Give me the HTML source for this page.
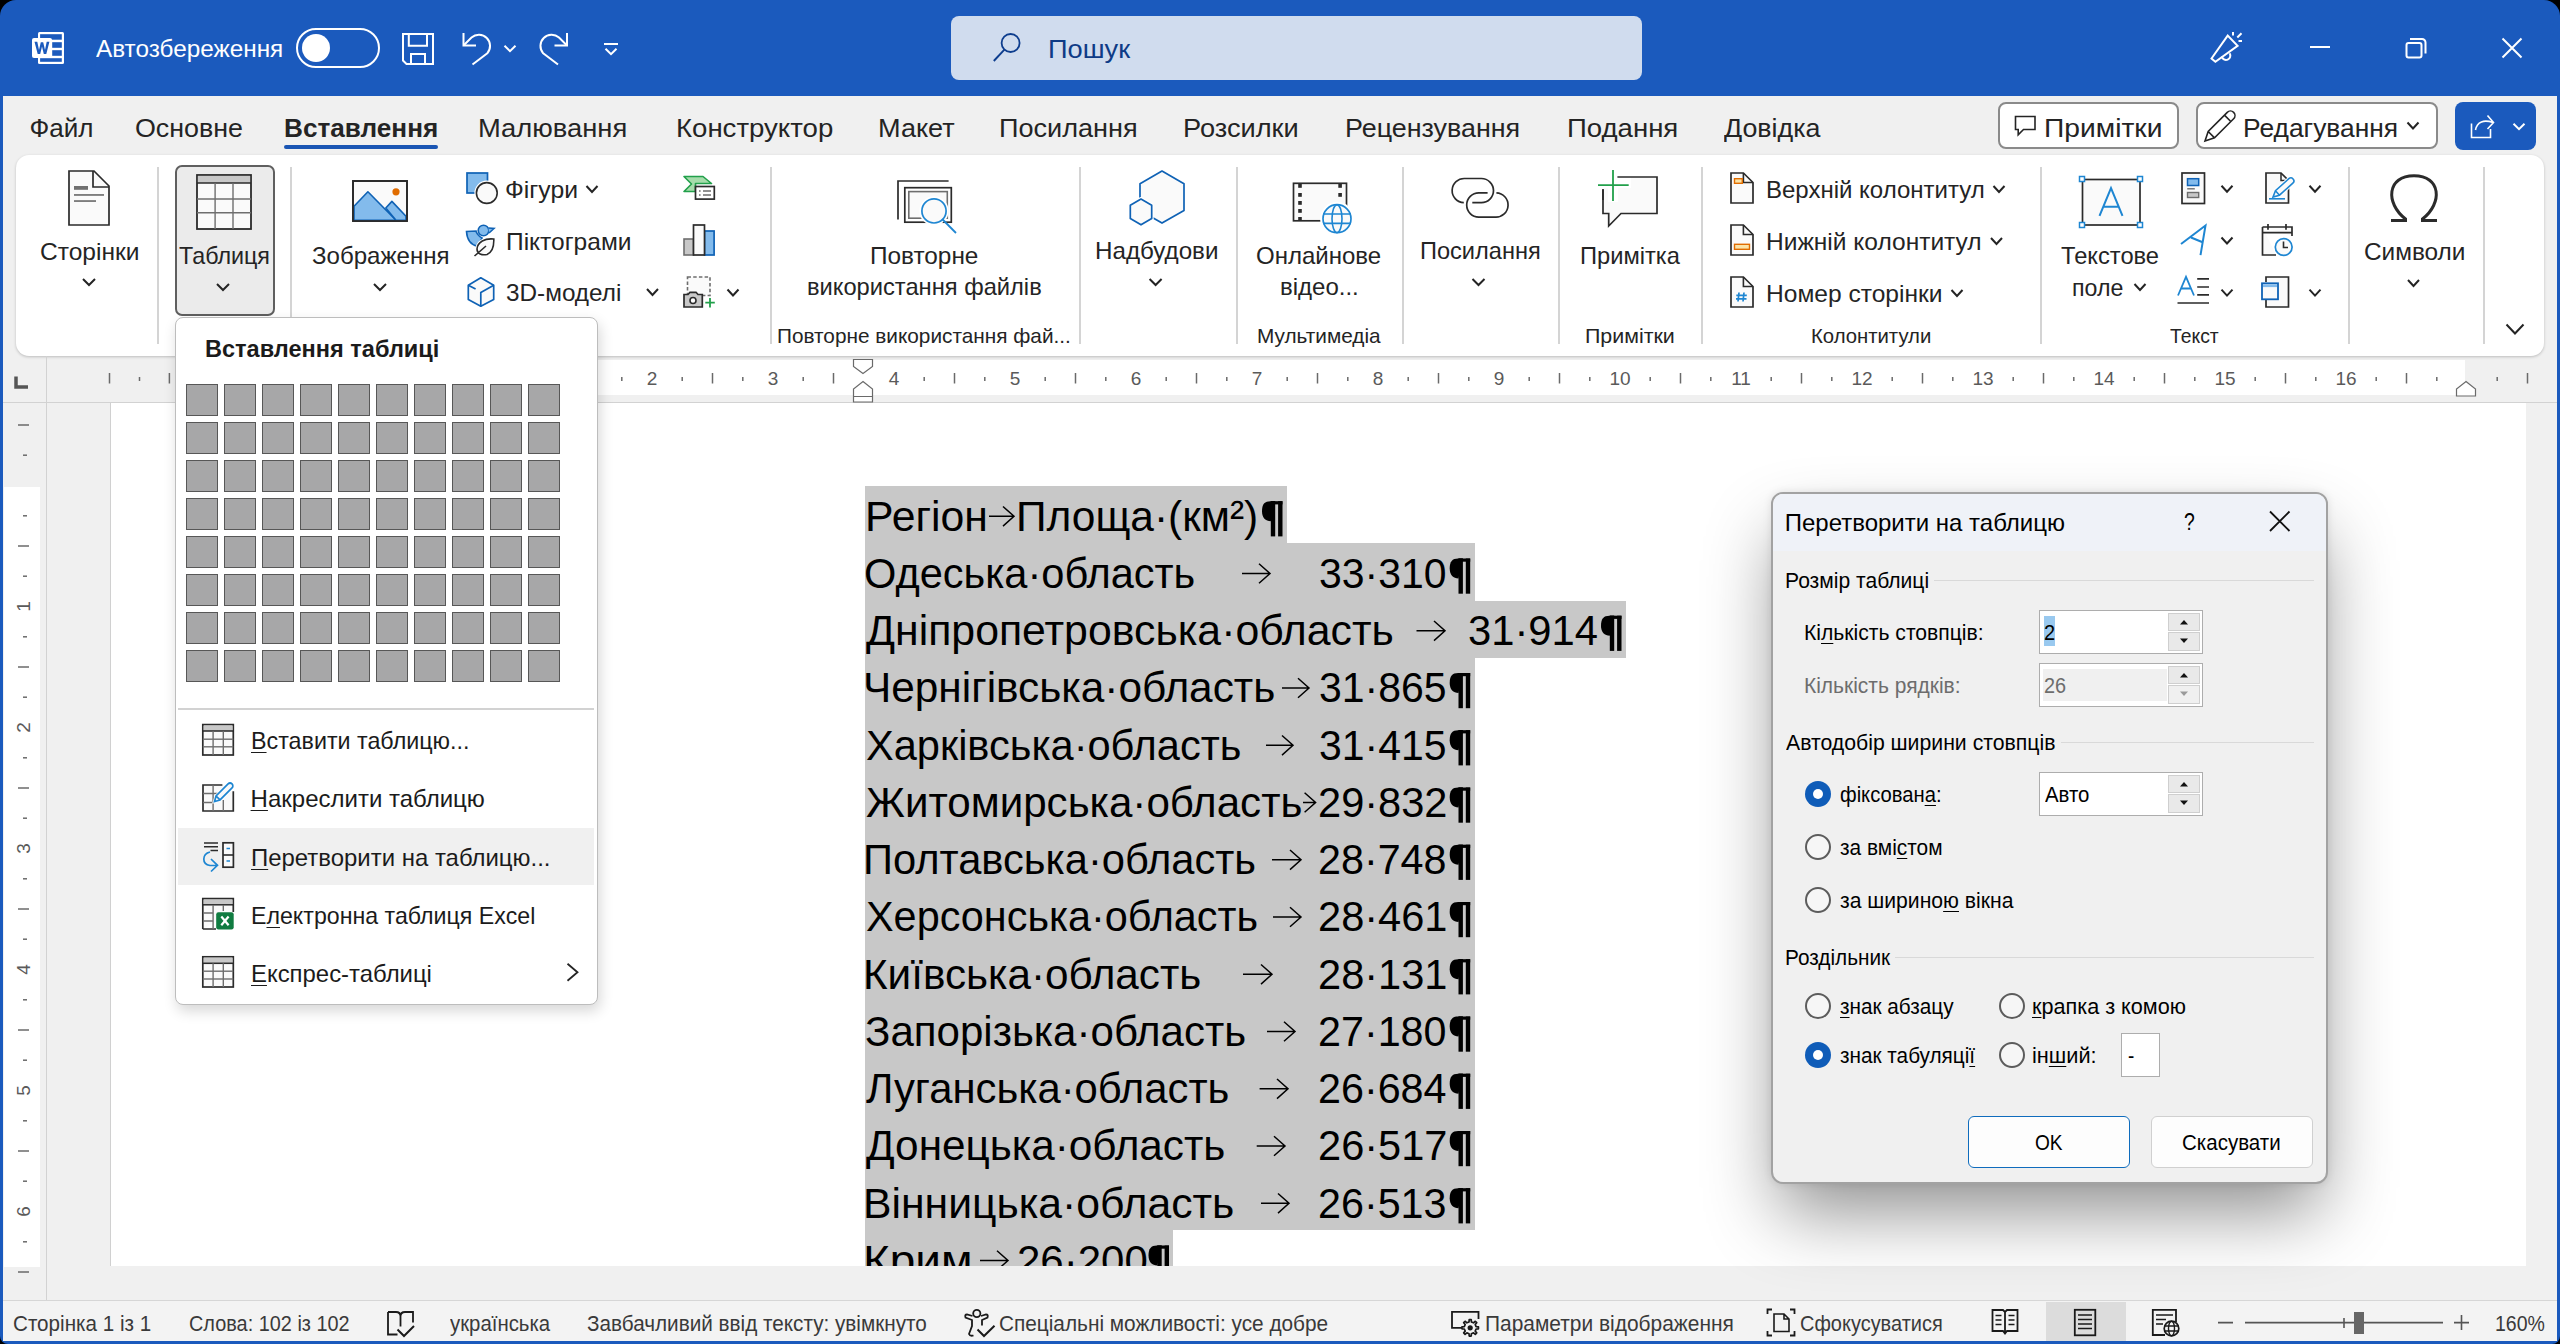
<!DOCTYPE html><html><head><meta charset="utf-8"><style>
*{margin:0;padding:0;box-sizing:border-box}
html,body{width:2560px;height:1344px;overflow:hidden;background:#000}
body{position:relative;font-family:"Liberation Sans",sans-serif}
.a{position:absolute}
.t{position:absolute;white-space:nowrap;line-height:1;transform-origin:0 0}
.t u{text-decoration:underline;text-decoration-thickness:1px;text-underline-offset:3px}
svg{position:absolute;overflow:visible}
.sep{position:absolute;width:2px;background:#d4d4d4}
.cell{position:absolute;width:32px;height:32px;background:#a7a7a8;border:1.5px solid #575757}
.rt{position:absolute;width:1.5px;background:#6a6a6a}
.radio{position:absolute;width:26px;height:26px;border-radius:50%;border:2px solid #5c5c5c;background:#f6f6f6}
.radio.on{background:#0f5cb8;border:none}
.radio.on::after{content:"";position:absolute;left:8px;top:8px;width:10px;height:10px;border-radius:50%;background:#fff}
</style></head><body>
<div class="a" style="left:0;top:0;width:2560px;height:1344px;background:#1b5abd;border-radius:16px 16px 8px 8px"></div>
<div class="a" style="left:3px;top:96px;width:2554px;height:1245px;background:#f0f0f0"></div>
<div class="a" style="left:951px;top:16px;width:691px;height:64px;background:#d0dcee;border-radius:8px"></div>
<div class="a" style="left:16px;top:155px;width:2528px;height:201px;background:#fff;border-radius:13px;box-shadow:0 1px 3px rgba(0,0,0,0.22)"></div>
<div class="a" style="left:250px;top:360px;width:2215px;height:35px;background:#fff"></div>
<div class="a" style="left:3px;top:402px;width:2554px;height:1px;background:#d2d2d2"></div>
<div class="a" style="left:46px;top:356px;width:1px;height:945px;background:#d2d2d2"></div>
<div class="a" style="left:4px;top:487px;width:36px;height:780px;background:#fff"></div>
<div class="a" style="left:110px;top:403px;width:2416px;height:863px;background:#fff;border-left:1px solid #d0d0d0"></div>
<div class="a" style="left:3px;top:1300px;width:2554px;height:1px;background:#d6d6d6"></div>
<div class="a" style="left:3px;top:1301px;width:2554px;height:40px;background:#f3f3f3"></div>
<div class="a" style="left:2046px;top:1302px;width:80px;height:39px;background:#dcdcdc"></div>
<div class="a" style="left:284px;top:145px;width:154px;height:4px;background:#1a55b3;border-radius:2px"></div>
<div class="a" style="left:1998px;top:102px;width:181px;height:47px;background:#fff;border:2px solid #8a8a8a;border-radius:8px"></div>
<div class="a" style="left:2196px;top:102px;width:242px;height:47px;background:#fff;border:2px solid #8a8a8a;border-radius:8px"></div>
<div class="a" style="left:2455px;top:102px;width:81px;height:48px;background:#1b5abd;border-radius:8px"></div>
<div class="sep" style="left:157px;top:167px;height:177px"></div>
<div class="sep" style="left:290px;top:167px;height:177px"></div>
<div class="sep" style="left:770px;top:167px;height:177px"></div>
<div class="sep" style="left:1079px;top:167px;height:177px"></div>
<div class="sep" style="left:1236px;top:167px;height:177px"></div>
<div class="sep" style="left:1402px;top:167px;height:177px"></div>
<div class="sep" style="left:1558px;top:167px;height:177px"></div>
<div class="sep" style="left:1701px;top:167px;height:177px"></div>
<div class="sep" style="left:2040px;top:167px;height:177px"></div>
<div class="sep" style="left:2348px;top:167px;height:177px"></div>
<div class="sep" style="left:2483px;top:167px;height:177px"></div>
<div class="a" style="left:175px;top:165px;width:100px;height:151px;background:#ebebeb;border:2px solid #5f5f5f;border-radius:7px"></div>
<div class="a" style="left:865px;top:486.00px;width:422.00px;height:57.00px;background:#c8c8c8"></div>
<div class="a" style="left:865px;top:543.25px;width:609.90px;height:57.25px;background:#c8c8c8"></div>
<div class="a" style="left:865px;top:600.50px;width:760.70px;height:57.25px;background:#c8c8c8"></div>
<div class="a" style="left:865px;top:657.75px;width:609.90px;height:57.25px;background:#c8c8c8"></div>
<div class="a" style="left:865px;top:715.00px;width:609.90px;height:57.25px;background:#c8c8c8"></div>
<div class="a" style="left:865px;top:772.25px;width:609.90px;height:57.25px;background:#c8c8c8"></div>
<div class="a" style="left:865px;top:829.50px;width:609.90px;height:57.25px;background:#c8c8c8"></div>
<div class="a" style="left:865px;top:886.75px;width:609.90px;height:57.25px;background:#c8c8c8"></div>
<div class="a" style="left:865px;top:944.00px;width:609.90px;height:57.25px;background:#c8c8c8"></div>
<div class="a" style="left:865px;top:1001.25px;width:609.90px;height:57.25px;background:#c8c8c8"></div>
<div class="a" style="left:865px;top:1058.50px;width:609.90px;height:57.25px;background:#c8c8c8"></div>
<div class="a" style="left:865px;top:1115.75px;width:609.90px;height:57.25px;background:#c8c8c8"></div>
<div class="a" style="left:865px;top:1173.00px;width:609.90px;height:57.25px;background:#c8c8c8"></div>
<div class="a" style="left:865px;top:1230.25px;width:307.70px;height:35.75px;background:#c8c8c8"></div>
<svg width="2560" height="1344" style="left:0;top:0"><path d="M989.0 516.3 H1013.5 M1003.0 506.5 L1014.0 516.3 L1003.0 526.1" fill="none" stroke="#000" stroke-width="1.5"/>
<path d="M1275.2 501.2 H1270.5 C1264.5 501.2 1262.0 504.2 1262.0 511.2 C1262.0 517.7 1265.5 521.2 1270.8 521.2 Z" fill="#000"/><rect x="1270.8" y="501.2" width="4.4" height="35.2" fill="#000"/><rect x="1278.1" y="501.2" width="4.4" height="35.2" fill="#000"/><rect x="1270.8" y="501.2" width="11.7" height="3.2" fill="#000"/>
<path d="M1242.0 573.5 H1269.5 M1259.0 563.8 L1270.0 573.5 L1259.0 583.3" fill="none" stroke="#000" stroke-width="1.5"/>
<path d="M1462.9 558.5 H1458.2 C1452.2 558.5 1449.7 561.5 1449.7 568.5 C1449.7 575.0 1453.2 578.5 1458.5 578.5 Z" fill="#000"/><rect x="1458.5" y="558.5" width="4.4" height="35.2" fill="#000"/><rect x="1465.8" y="558.5" width="4.4" height="35.2" fill="#000"/><rect x="1458.5" y="558.5" width="11.7" height="3.2" fill="#000"/>
<path d="M1416.5 630.8 H1444.5 M1434.0 621.0 L1445.0 630.8 L1434.0 640.6" fill="none" stroke="#000" stroke-width="1.5"/>
<path d="M1614.2 615.7 H1609.5 C1603.5 615.7 1601.0 618.7 1601.0 625.7 C1601.0 632.2 1604.5 635.7 1609.8 635.7 Z" fill="#000"/><rect x="1609.8" y="615.7" width="4.4" height="35.2" fill="#000"/><rect x="1617.1" y="615.7" width="4.4" height="35.2" fill="#000"/><rect x="1609.8" y="615.7" width="11.7" height="3.2" fill="#000"/>
<path d="M1282.0 688.0 H1308.5 M1298.0 678.2 L1309.0 688.0 L1298.0 697.8" fill="none" stroke="#000" stroke-width="1.5"/>
<path d="M1462.9 673.0 H1458.2 C1452.2 673.0 1449.7 676.0 1449.7 683.0 C1449.7 689.5 1453.2 693.0 1458.5 693.0 Z" fill="#000"/><rect x="1458.5" y="673.0" width="4.4" height="35.2" fill="#000"/><rect x="1465.8" y="673.0" width="4.4" height="35.2" fill="#000"/><rect x="1458.5" y="673.0" width="11.7" height="3.2" fill="#000"/>
<path d="M1266.0 745.3 H1292.5 M1282.0 735.5 L1293.0 745.3 L1282.0 755.1" fill="none" stroke="#000" stroke-width="1.5"/>
<path d="M1462.9 730.2 H1458.2 C1452.2 730.2 1449.7 733.2 1449.7 740.2 C1449.7 746.7 1453.2 750.2 1458.5 750.2 Z" fill="#000"/><rect x="1458.5" y="730.2" width="4.4" height="35.2" fill="#000"/><rect x="1465.8" y="730.2" width="4.4" height="35.2" fill="#000"/><rect x="1458.5" y="730.2" width="11.7" height="3.2" fill="#000"/>
<path d="M1303.0 802.5 H1315.1 M1304.6 792.8 L1315.6 802.5 L1304.6 812.3" fill="none" stroke="#000" stroke-width="1.5"/>
<path d="M1462.9 787.5 H1458.2 C1452.2 787.5 1449.7 790.5 1449.7 797.5 C1449.7 804.0 1453.2 807.5 1458.5 807.5 Z" fill="#000"/><rect x="1458.5" y="787.5" width="4.4" height="35.2" fill="#000"/><rect x="1465.8" y="787.5" width="4.4" height="35.2" fill="#000"/><rect x="1458.5" y="787.5" width="11.7" height="3.2" fill="#000"/>
<path d="M1272.0 859.8 H1300.5 M1290.0 850.0 L1301.0 859.8 L1290.0 869.6" fill="none" stroke="#000" stroke-width="1.5"/>
<path d="M1462.9 844.7 H1458.2 C1452.2 844.7 1449.7 847.7 1449.7 854.7 C1449.7 861.2 1453.2 864.7 1458.5 864.7 Z" fill="#000"/><rect x="1458.5" y="844.7" width="4.4" height="35.2" fill="#000"/><rect x="1465.8" y="844.7" width="4.4" height="35.2" fill="#000"/><rect x="1458.5" y="844.7" width="11.7" height="3.2" fill="#000"/>
<path d="M1273.0 917.0 H1300.5 M1290.0 907.2 L1301.0 917.0 L1290.0 926.8" fill="none" stroke="#000" stroke-width="1.5"/>
<path d="M1462.9 902.0 H1458.2 C1452.2 902.0 1449.7 905.0 1449.7 912.0 C1449.7 918.5 1453.2 922.0 1458.5 922.0 Z" fill="#000"/><rect x="1458.5" y="902.0" width="4.4" height="35.2" fill="#000"/><rect x="1465.8" y="902.0" width="4.4" height="35.2" fill="#000"/><rect x="1458.5" y="902.0" width="11.7" height="3.2" fill="#000"/>
<path d="M1243.0 974.3 H1271.5 M1261.0 964.5 L1272.0 974.3 L1261.0 984.1" fill="none" stroke="#000" stroke-width="1.5"/>
<path d="M1462.9 959.2 H1458.2 C1452.2 959.2 1449.7 962.2 1449.7 969.2 C1449.7 975.7 1453.2 979.2 1458.5 979.2 Z" fill="#000"/><rect x="1458.5" y="959.2" width="4.4" height="35.2" fill="#000"/><rect x="1465.8" y="959.2" width="4.4" height="35.2" fill="#000"/><rect x="1458.5" y="959.2" width="11.7" height="3.2" fill="#000"/>
<path d="M1267.0 1031.5 H1294.5 M1284.0 1021.8 L1295.0 1031.5 L1284.0 1041.3" fill="none" stroke="#000" stroke-width="1.5"/>
<path d="M1462.9 1016.5 H1458.2 C1452.2 1016.5 1449.7 1019.5 1449.7 1026.5 C1449.7 1033.0 1453.2 1036.5 1458.5 1036.5 Z" fill="#000"/><rect x="1458.5" y="1016.5" width="4.4" height="35.2" fill="#000"/><rect x="1465.8" y="1016.5" width="4.4" height="35.2" fill="#000"/><rect x="1458.5" y="1016.5" width="11.7" height="3.2" fill="#000"/>
<path d="M1259.6 1088.8 H1287.5 M1277.0 1079.0 L1288.0 1088.8 L1277.0 1098.6" fill="none" stroke="#000" stroke-width="1.5"/>
<path d="M1462.9 1073.7 H1458.2 C1452.2 1073.7 1449.7 1076.7 1449.7 1083.7 C1449.7 1090.2 1453.2 1093.7 1458.5 1093.7 Z" fill="#000"/><rect x="1458.5" y="1073.7" width="4.4" height="35.2" fill="#000"/><rect x="1465.8" y="1073.7" width="4.4" height="35.2" fill="#000"/><rect x="1458.5" y="1073.7" width="11.7" height="3.2" fill="#000"/>
<path d="M1256.7 1146.0 H1284.5 M1274.0 1136.2 L1285.0 1146.0 L1274.0 1155.8" fill="none" stroke="#000" stroke-width="1.5"/>
<path d="M1462.9 1131.0 H1458.2 C1452.2 1131.0 1449.7 1134.0 1449.7 1141.0 C1449.7 1147.5 1453.2 1151.0 1458.5 1151.0 Z" fill="#000"/><rect x="1458.5" y="1131.0" width="4.4" height="35.2" fill="#000"/><rect x="1465.8" y="1131.0" width="4.4" height="35.2" fill="#000"/><rect x="1458.5" y="1131.0" width="11.7" height="3.2" fill="#000"/>
<path d="M1261.0 1203.3 H1288.5 M1278.0 1193.5 L1289.0 1203.3 L1278.0 1213.1" fill="none" stroke="#000" stroke-width="1.5"/>
<path d="M1462.9 1188.2 H1458.2 C1452.2 1188.2 1449.7 1191.2 1449.7 1198.2 C1449.7 1204.7 1453.2 1208.2 1458.5 1208.2 Z" fill="#000"/><rect x="1458.5" y="1188.2" width="4.4" height="35.2" fill="#000"/><rect x="1465.8" y="1188.2" width="4.4" height="35.2" fill="#000"/><rect x="1458.5" y="1188.2" width="11.7" height="3.2" fill="#000"/>
<path d="M980.0 1260.5 H1007.5 M997.0 1250.8 L1008.0 1260.5 L997.0 1270.3" fill="none" stroke="#000" stroke-width="1.5"/>
<path d="M1161.7 1245.5 H1157.0 C1151.0 1245.5 1148.5 1248.5 1148.5 1255.5 C1148.5 1262.0 1152.0 1265.5 1157.3 1265.5 Z" fill="#000"/><rect x="1157.3" y="1245.5" width="4.4" height="35.2" fill="#000"/><rect x="1164.6" y="1245.5" width="4.4" height="35.2" fill="#000"/><rect x="1157.3" y="1245.5" width="11.7" height="3.2" fill="#000"/>
<path d="M198.2 377 V381" stroke="#6a6a6a" stroke-width="1.5"/><path d="M228.5 373 V383.5" stroke="#6a6a6a" stroke-width="1.5"/><path d="M258.8 377 V381" stroke="#6a6a6a" stroke-width="1.5"/><path d="M319.2 377 V381" stroke="#6a6a6a" stroke-width="1.5"/><path d="M349.5 373 V383.5" stroke="#6a6a6a" stroke-width="1.5"/><path d="M379.8 377 V381" stroke="#6a6a6a" stroke-width="1.5"/><path d="M440.2 377 V381" stroke="#6a6a6a" stroke-width="1.5"/><path d="M470.5 373 V383.5" stroke="#6a6a6a" stroke-width="1.5"/><path d="M500.8 377 V381" stroke="#6a6a6a" stroke-width="1.5"/><path d="M561.2 377 V381" stroke="#6a6a6a" stroke-width="1.5"/><path d="M591.5 373 V383.5" stroke="#6a6a6a" stroke-width="1.5"/><path d="M621.8 377 V381" stroke="#6a6a6a" stroke-width="1.5"/><path d="M682.2 377 V381" stroke="#6a6a6a" stroke-width="1.5"/><path d="M712.5 373 V383.5" stroke="#6a6a6a" stroke-width="1.5"/><path d="M742.8 377 V381" stroke="#6a6a6a" stroke-width="1.5"/><path d="M803.2 377 V381" stroke="#6a6a6a" stroke-width="1.5"/><path d="M833.5 373 V383.5" stroke="#6a6a6a" stroke-width="1.5"/><path d="M924.2 377 V381" stroke="#6a6a6a" stroke-width="1.5"/><path d="M954.5 373 V383.5" stroke="#6a6a6a" stroke-width="1.5"/><path d="M984.8 377 V381" stroke="#6a6a6a" stroke-width="1.5"/><path d="M1045.2 377 V381" stroke="#6a6a6a" stroke-width="1.5"/><path d="M1075.5 373 V383.5" stroke="#6a6a6a" stroke-width="1.5"/><path d="M1105.8 377 V381" stroke="#6a6a6a" stroke-width="1.5"/><path d="M1166.2 377 V381" stroke="#6a6a6a" stroke-width="1.5"/><path d="M1196.5 373 V383.5" stroke="#6a6a6a" stroke-width="1.5"/><path d="M1226.8 377 V381" stroke="#6a6a6a" stroke-width="1.5"/><path d="M1287.2 377 V381" stroke="#6a6a6a" stroke-width="1.5"/><path d="M1317.5 373 V383.5" stroke="#6a6a6a" stroke-width="1.5"/><path d="M1347.8 377 V381" stroke="#6a6a6a" stroke-width="1.5"/><path d="M1408.2 377 V381" stroke="#6a6a6a" stroke-width="1.5"/><path d="M1438.5 373 V383.5" stroke="#6a6a6a" stroke-width="1.5"/><path d="M1468.8 377 V381" stroke="#6a6a6a" stroke-width="1.5"/><path d="M1529.2 377 V381" stroke="#6a6a6a" stroke-width="1.5"/><path d="M1559.5 373 V383.5" stroke="#6a6a6a" stroke-width="1.5"/><path d="M1589.8 377 V381" stroke="#6a6a6a" stroke-width="1.5"/><path d="M1650.2 377 V381" stroke="#6a6a6a" stroke-width="1.5"/><path d="M1680.5 373 V383.5" stroke="#6a6a6a" stroke-width="1.5"/><path d="M1710.8 377 V381" stroke="#6a6a6a" stroke-width="1.5"/><path d="M1771.2 377 V381" stroke="#6a6a6a" stroke-width="1.5"/><path d="M1801.5 373 V383.5" stroke="#6a6a6a" stroke-width="1.5"/><path d="M1831.8 377 V381" stroke="#6a6a6a" stroke-width="1.5"/><path d="M1892.2 377 V381" stroke="#6a6a6a" stroke-width="1.5"/><path d="M1922.5 373 V383.5" stroke="#6a6a6a" stroke-width="1.5"/><path d="M1952.8 377 V381" stroke="#6a6a6a" stroke-width="1.5"/><path d="M2013.2 377 V381" stroke="#6a6a6a" stroke-width="1.5"/><path d="M2043.5 373 V383.5" stroke="#6a6a6a" stroke-width="1.5"/><path d="M2073.8 377 V381" stroke="#6a6a6a" stroke-width="1.5"/><path d="M2134.2 377 V381" stroke="#6a6a6a" stroke-width="1.5"/><path d="M2164.5 373 V383.5" stroke="#6a6a6a" stroke-width="1.5"/><path d="M2194.8 377 V381" stroke="#6a6a6a" stroke-width="1.5"/><path d="M2255.2 377 V381" stroke="#6a6a6a" stroke-width="1.5"/><path d="M2285.5 373 V383.5" stroke="#6a6a6a" stroke-width="1.5"/><path d="M2315.8 377 V381" stroke="#6a6a6a" stroke-width="1.5"/><path d="M2376.2 377 V381" stroke="#6a6a6a" stroke-width="1.5"/><path d="M2406.5 373 V383.5" stroke="#6a6a6a" stroke-width="1.5"/><path d="M2436.8 377 V381" stroke="#6a6a6a" stroke-width="1.5"/><path d="M2497.2 377 V381" stroke="#6a6a6a" stroke-width="1.5"/><path d="M2527.5 373 V383.5" stroke="#6a6a6a" stroke-width="1.5"/><path d="M109.5 373 V383.5" stroke="#6a6a6a" stroke-width="1.5"/><path d="M139.5 377 V381" stroke="#6a6a6a" stroke-width="1.5"/><path d="M169.4 373 V383.5" stroke="#6a6a6a" stroke-width="1.5"/>
<path d="M853.5 359.5 H872.5 V366.5 L863 373.5 L853.5 366.5 Z" fill="#fff" stroke="#6a6a6a" stroke-width="1.2"/>
<path d="M863 381.5 L872.5 389 V402 H853.5 V389 Z M853.5 396.5 H872.5" fill="#fff" stroke="#6a6a6a" stroke-width="1.2"/>
<path d="M2466 381.5 L2475.5 389 V396 H2456.5 V389 Z" fill="#fff" stroke="#6a6a6a" stroke-width="1.2"/>
<path d="M16 376.5 V387 H28" fill="none" stroke="#555" stroke-width="3.5"/>
<path d="M18 425.0 H29" stroke="#6a6a6a" stroke-width="1.5"/><path d="M23 455.2 H27" stroke="#6a6a6a" stroke-width="1.5"/><path d="M23 515.8 H27" stroke="#6a6a6a" stroke-width="1.5"/><path d="M18 546.0 H29" stroke="#6a6a6a" stroke-width="1.5"/><path d="M23 576.2 H27" stroke="#6a6a6a" stroke-width="1.5"/><path d="M23 636.8 H27" stroke="#6a6a6a" stroke-width="1.5"/><path d="M18 667.0 H29" stroke="#6a6a6a" stroke-width="1.5"/><path d="M23 697.2 H27" stroke="#6a6a6a" stroke-width="1.5"/><path d="M23 757.8 H27" stroke="#6a6a6a" stroke-width="1.5"/><path d="M18 788.0 H29" stroke="#6a6a6a" stroke-width="1.5"/><path d="M23 818.2 H27" stroke="#6a6a6a" stroke-width="1.5"/><path d="M23 878.8 H27" stroke="#6a6a6a" stroke-width="1.5"/><path d="M18 909.0 H29" stroke="#6a6a6a" stroke-width="1.5"/><path d="M23 939.2 H27" stroke="#6a6a6a" stroke-width="1.5"/><path d="M23 999.8 H27" stroke="#6a6a6a" stroke-width="1.5"/><path d="M18 1030.0 H29" stroke="#6a6a6a" stroke-width="1.5"/><path d="M23 1060.2 H27" stroke="#6a6a6a" stroke-width="1.5"/><path d="M23 1120.8 H27" stroke="#6a6a6a" stroke-width="1.5"/><path d="M18 1151.0 H29" stroke="#6a6a6a" stroke-width="1.5"/><path d="M23 1181.2 H27" stroke="#6a6a6a" stroke-width="1.5"/><path d="M23 1241.8 H27" stroke="#6a6a6a" stroke-width="1.5"/><path d="M18 1272.0 H29" stroke="#6a6a6a" stroke-width="1.5"/><text x="652.0" y="385" font-family="Liberation Sans" font-size="19" text-anchor="middle" fill="#5a5a5a">2</text><text x="773.0" y="385" font-family="Liberation Sans" font-size="19" text-anchor="middle" fill="#5a5a5a">3</text><text x="894.0" y="385" font-family="Liberation Sans" font-size="19" text-anchor="middle" fill="#5a5a5a">4</text><text x="1015.0" y="385" font-family="Liberation Sans" font-size="19" text-anchor="middle" fill="#5a5a5a">5</text><text x="1136.0" y="385" font-family="Liberation Sans" font-size="19" text-anchor="middle" fill="#5a5a5a">6</text><text x="1257.0" y="385" font-family="Liberation Sans" font-size="19" text-anchor="middle" fill="#5a5a5a">7</text><text x="1378.0" y="385" font-family="Liberation Sans" font-size="19" text-anchor="middle" fill="#5a5a5a">8</text><text x="1499.0" y="385" font-family="Liberation Sans" font-size="19" text-anchor="middle" fill="#5a5a5a">9</text><text x="1620.0" y="385" font-family="Liberation Sans" font-size="19" text-anchor="middle" fill="#5a5a5a">10</text><text x="1741.0" y="385" font-family="Liberation Sans" font-size="19" text-anchor="middle" fill="#5a5a5a">11</text><text x="1862.0" y="385" font-family="Liberation Sans" font-size="19" text-anchor="middle" fill="#5a5a5a">12</text><text x="1983.0" y="385" font-family="Liberation Sans" font-size="19" text-anchor="middle" fill="#5a5a5a">13</text><text x="2104.0" y="385" font-family="Liberation Sans" font-size="19" text-anchor="middle" fill="#5a5a5a">14</text><text x="2225.0" y="385" font-family="Liberation Sans" font-size="19" text-anchor="middle" fill="#5a5a5a">15</text><text x="2346.0" y="385" font-family="Liberation Sans" font-size="19" text-anchor="middle" fill="#5a5a5a">16</text><text x="29.5" y="613.3" font-family="Liberation Sans" font-size="19" text-anchor="middle" fill="#5a5a5a" transform="rotate(-90 22.9 606.5)" dx="-6.6" dy="0">1</text><text x="29.5" y="734.3" font-family="Liberation Sans" font-size="19" text-anchor="middle" fill="#5a5a5a" transform="rotate(-90 22.9 727.5)" dx="-6.6" dy="0">2</text><text x="29.5" y="855.3" font-family="Liberation Sans" font-size="19" text-anchor="middle" fill="#5a5a5a" transform="rotate(-90 22.9 848.5)" dx="-6.6" dy="0">3</text><text x="29.5" y="976.3" font-family="Liberation Sans" font-size="19" text-anchor="middle" fill="#5a5a5a" transform="rotate(-90 22.9 969.5)" dx="-6.6" dy="0">4</text><text x="29.5" y="1097.3" font-family="Liberation Sans" font-size="19" text-anchor="middle" fill="#5a5a5a" transform="rotate(-90 22.9 1090.5)" dx="-6.6" dy="0">5</text><text x="29.5" y="1218.3" font-family="Liberation Sans" font-size="19" text-anchor="middle" fill="#5a5a5a" transform="rotate(-90 22.9 1211.5)" dx="-6.6" dy="0">6</text></svg>
<div class="a" style="left:175px;top:317px;width:423px;height:688px;background:#fff;border:1.5px solid #bdbdbd;border-radius:8px;box-shadow:2px 6px 14px rgba(0,0,0,0.16)"></div>
<div class="cell" style="left:186px;top:384px"></div>
<div class="cell" style="left:224px;top:384px"></div>
<div class="cell" style="left:262px;top:384px"></div>
<div class="cell" style="left:300px;top:384px"></div>
<div class="cell" style="left:338px;top:384px"></div>
<div class="cell" style="left:376px;top:384px"></div>
<div class="cell" style="left:414px;top:384px"></div>
<div class="cell" style="left:452px;top:384px"></div>
<div class="cell" style="left:490px;top:384px"></div>
<div class="cell" style="left:528px;top:384px"></div>
<div class="cell" style="left:186px;top:422px"></div>
<div class="cell" style="left:224px;top:422px"></div>
<div class="cell" style="left:262px;top:422px"></div>
<div class="cell" style="left:300px;top:422px"></div>
<div class="cell" style="left:338px;top:422px"></div>
<div class="cell" style="left:376px;top:422px"></div>
<div class="cell" style="left:414px;top:422px"></div>
<div class="cell" style="left:452px;top:422px"></div>
<div class="cell" style="left:490px;top:422px"></div>
<div class="cell" style="left:528px;top:422px"></div>
<div class="cell" style="left:186px;top:460px"></div>
<div class="cell" style="left:224px;top:460px"></div>
<div class="cell" style="left:262px;top:460px"></div>
<div class="cell" style="left:300px;top:460px"></div>
<div class="cell" style="left:338px;top:460px"></div>
<div class="cell" style="left:376px;top:460px"></div>
<div class="cell" style="left:414px;top:460px"></div>
<div class="cell" style="left:452px;top:460px"></div>
<div class="cell" style="left:490px;top:460px"></div>
<div class="cell" style="left:528px;top:460px"></div>
<div class="cell" style="left:186px;top:498px"></div>
<div class="cell" style="left:224px;top:498px"></div>
<div class="cell" style="left:262px;top:498px"></div>
<div class="cell" style="left:300px;top:498px"></div>
<div class="cell" style="left:338px;top:498px"></div>
<div class="cell" style="left:376px;top:498px"></div>
<div class="cell" style="left:414px;top:498px"></div>
<div class="cell" style="left:452px;top:498px"></div>
<div class="cell" style="left:490px;top:498px"></div>
<div class="cell" style="left:528px;top:498px"></div>
<div class="cell" style="left:186px;top:536px"></div>
<div class="cell" style="left:224px;top:536px"></div>
<div class="cell" style="left:262px;top:536px"></div>
<div class="cell" style="left:300px;top:536px"></div>
<div class="cell" style="left:338px;top:536px"></div>
<div class="cell" style="left:376px;top:536px"></div>
<div class="cell" style="left:414px;top:536px"></div>
<div class="cell" style="left:452px;top:536px"></div>
<div class="cell" style="left:490px;top:536px"></div>
<div class="cell" style="left:528px;top:536px"></div>
<div class="cell" style="left:186px;top:574px"></div>
<div class="cell" style="left:224px;top:574px"></div>
<div class="cell" style="left:262px;top:574px"></div>
<div class="cell" style="left:300px;top:574px"></div>
<div class="cell" style="left:338px;top:574px"></div>
<div class="cell" style="left:376px;top:574px"></div>
<div class="cell" style="left:414px;top:574px"></div>
<div class="cell" style="left:452px;top:574px"></div>
<div class="cell" style="left:490px;top:574px"></div>
<div class="cell" style="left:528px;top:574px"></div>
<div class="cell" style="left:186px;top:612px"></div>
<div class="cell" style="left:224px;top:612px"></div>
<div class="cell" style="left:262px;top:612px"></div>
<div class="cell" style="left:300px;top:612px"></div>
<div class="cell" style="left:338px;top:612px"></div>
<div class="cell" style="left:376px;top:612px"></div>
<div class="cell" style="left:414px;top:612px"></div>
<div class="cell" style="left:452px;top:612px"></div>
<div class="cell" style="left:490px;top:612px"></div>
<div class="cell" style="left:528px;top:612px"></div>
<div class="cell" style="left:186px;top:650px"></div>
<div class="cell" style="left:224px;top:650px"></div>
<div class="cell" style="left:262px;top:650px"></div>
<div class="cell" style="left:300px;top:650px"></div>
<div class="cell" style="left:338px;top:650px"></div>
<div class="cell" style="left:376px;top:650px"></div>
<div class="cell" style="left:414px;top:650px"></div>
<div class="cell" style="left:452px;top:650px"></div>
<div class="cell" style="left:490px;top:650px"></div>
<div class="cell" style="left:528px;top:650px"></div>
<div class="a" style="left:178px;top:708px;width:416px;height:2px;background:#d2d2d2"></div>
<div class="a" style="left:178px;top:828px;width:416px;height:57px;background:#f0f0f0"></div>
<div class="a" style="left:1771px;top:492px;width:557px;height:692px;background:#f0f0f0;border:2px solid #a2a2a2;border-radius:12px;box-shadow:0 36px 72px -8px rgba(0,0,0,0.44), 0 0 8px rgba(0,0,0,0.10);overflow:hidden"><div style="height:57px;background:#eff2f8"></div></div>
<div class="a" style="left:1934px;top:580px;width:380px;height:1px;background:#d9d9d9"></div>
<div class="a" style="left:2061px;top:742px;width:253px;height:1px;background:#d9d9d9"></div>
<div class="a" style="left:1895px;top:957px;width:419px;height:1px;background:#d9d9d9"></div>
<div class="a" style="left:2039px;top:610px;width:164px;height:44px;background:#fff;border:1.5px solid #adadad"></div><div class="a" style="left:2168px;top:613px;width:32px;height:18px;background:#e9e9e9;border:1px solid #cfcfcf"></div><div class="a" style="left:2168px;top:632px;width:32px;height:19px;background:#e9e9e9;border:1px solid #cfcfcf"></div>
<div class="a" style="left:2039px;top:663px;width:164px;height:44px;background:#fff;border:1.5px solid #adadad"></div><div class="a" style="left:2043px;top:669px;width:124px;height:32px;background:#f0f0f0"></div><div class="a" style="left:2168px;top:666px;width:32px;height:18px;background:#e9e9e9;border:1px solid #cfcfcf"></div><div class="a" style="left:2168px;top:685px;width:32px;height:19px;background:#f0f0f0;border:1px solid #cfcfcf"></div>
<div class="a" style="left:2039px;top:772px;width:164px;height:44px;background:#fff;border:1.5px solid #adadad"></div><div class="a" style="left:2168px;top:775px;width:32px;height:18px;background:#e9e9e9;border:1px solid #cfcfcf"></div><div class="a" style="left:2168px;top:794px;width:32px;height:19px;background:#e9e9e9;border:1px solid #cfcfcf"></div>
<div class="a" style="left:2044px;top:616px;width:11px;height:30px;background:#99c9ef"></div>
<div class="a" style="left:2121px;top:1033px;width:39px;height:44px;background:#fff;border:1.5px solid #adadad"></div>
<div class="radio on" style="left:1805px;top:781px"></div>
<div class="radio" style="left:1805px;top:834px"></div>
<div class="radio" style="left:1805px;top:887px"></div>
<div class="radio" style="left:1805px;top:993px"></div>
<div class="radio" style="left:1999px;top:993px"></div>
<div class="radio on" style="left:1805px;top:1042px"></div>
<div class="radio" style="left:1999px;top:1042px"></div>
<div class="a" style="left:1968px;top:1116px;width:162px;height:52px;background:#fdfdfd;border:1.6px solid #0f6cbd;border-radius:6px"></div>
<div class="a" style="left:2151px;top:1116px;width:162px;height:52px;background:#fdfdfd;border:1.5px solid #d0d0d0;border-radius:6px"></div>
<div class="t" id="t0" style="left:96.30px;top:37.28px;font-size:24px;color:#ffffff;transform:scaleX(1.0124);">Автозбереження</div>
<div class="t" id="t1" style="left:1048.31px;top:35.79px;font-size:26px;color:#0e3b86;transform:scaleX(1.0467);">Пошук</div>
<div class="t" id="t2" style="left:29.60px;top:114.99px;font-size:26px;color:#242424;">Файл</div>
<div class="t" id="t3" style="left:135.47px;top:114.99px;font-size:26px;color:#242424;transform:scaleX(1.0318);">Основне</div>
<div class="t" id="t4" style="left:477.90px;top:114.99px;font-size:26px;color:#242424;transform:scaleX(1.0520);">Малювання</div>
<div class="t" id="t5" style="left:675.88px;top:114.99px;font-size:26px;color:#242424;transform:scaleX(1.0605);">Конструктор</div>
<div class="t" id="t6" style="left:877.92px;top:114.99px;font-size:26px;color:#242424;transform:scaleX(1.0422);">Макет</div>
<div class="t" id="t7" style="left:998.52px;top:114.99px;font-size:26px;color:#242424;transform:scaleX(1.0414);">Посилання</div>
<div class="t" id="t8" style="left:1182.91px;top:114.99px;font-size:26px;color:#242424;transform:scaleX(1.0461);">Розсилки</div>
<div class="t" id="t9" style="left:1344.93px;top:114.99px;font-size:26px;color:#242424;transform:scaleX(1.0336);">Рецензування</div>
<div class="t" id="t10" style="left:1566.88px;top:114.99px;font-size:26px;color:#242424;transform:scaleX(1.0596);">Подання</div>
<div class="t" id="t11" style="left:1724.00px;top:114.99px;font-size:26px;color:#242424;transform:scaleX(1.0312);">Довідка</div>
<div class="t" id="t12" style="left:283.99px;top:114.99px;font-size:26px;color:#242424;font-weight:700;transform:scaleX(1.0059);">Вставлення</div>
<div class="t" id="t13" style="left:2043.83px;top:114.99px;font-size:26px;color:#242424;transform:scaleX(1.0852);">Примітки</div>
<div class="t" id="t14" style="left:2242.97px;top:114.99px;font-size:26px;color:#242424;transform:scaleX(1.0140);">Редагування</div>
<div class="t" id="t15" style="left:39.58px;top:239.68px;font-size:24px;color:#242424;transform:scaleX(1.0228);">Сторінки</div>
<div class="t" id="t16" style="left:179.00px;top:243.68px;font-size:24px;color:#242424;transform:scaleX(0.9703);">Таблиця</div>
<div class="t" id="t17" style="left:311.50px;top:243.68px;font-size:24px;color:#242424;transform:scaleX(1.0022);">Зображення</div>
<div class="t" id="t18" style="left:504.97px;top:178.08px;font-size:24px;color:#242424;transform:scaleX(1.0305);">Фігури</div>
<div class="t" id="t19" style="left:505.98px;top:229.68px;font-size:24px;color:#242424;transform:scaleX(1.0218);">Піктограми</div>
<div class="t" id="t20" style="left:506.00px;top:281.28px;font-size:24px;color:#242424;transform:scaleX(1.0129);">3D-моделі</div>
<div class="t" id="t21" style="left:869.99px;top:243.68px;font-size:24px;color:#242424;transform:scaleX(1.0143);">Повторне</div>
<div class="t" id="t22" style="left:807.01px;top:274.68px;font-size:24px;color:#242424;transform:scaleX(0.9868);">використання файлів</div>
<div class="t" id="t23" style="left:777.01px;top:325.22px;font-size:21px;color:#242424;transform:scaleX(0.9897);">Повторне використання фай...</div>
<div class="t" id="t24" style="left:1094.99px;top:238.68px;font-size:24px;color:#242424;transform:scaleX(1.0066);">Надбудови</div>
<div class="t" id="t25" style="left:1256.00px;top:243.68px;font-size:24px;color:#242424;">Онлайнове</div>
<div class="t" id="t26" style="left:1280.00px;top:274.68px;font-size:24px;color:#242424;">відео...</div>
<div class="t" id="t27" style="left:1257.01px;top:325.22px;font-size:21px;color:#242424;transform:scaleX(0.9900);">Мультимедіа</div>
<div class="t" id="t28" style="left:1419.62px;top:239.08px;font-size:24px;color:#242424;transform:scaleX(0.9829);">Посилання</div>
<div class="t" id="t29" style="left:1579.51px;top:243.68px;font-size:24px;color:#242424;transform:scaleX(0.9866);">Примітка</div>
<div class="t" id="t30" style="left:1584.98px;top:325.02px;font-size:21px;color:#242424;transform:scaleX(1.0184);">Примітки</div>
<div class="t" id="t31" style="left:1766.00px;top:177.68px;font-size:24px;color:#242424;">Верхній колонтитул</div>
<div class="t" id="t32" style="left:1765.98px;top:230.18px;font-size:24px;color:#242424;transform:scaleX(1.0218);">Нижній колонтитул</div>
<div class="t" id="t33" style="left:1765.98px;top:281.68px;font-size:24px;color:#242424;transform:scaleX(1.0232);">Номер сторінки</div>
<div class="t" id="t34" style="left:1811.03px;top:325.02px;font-size:21px;color:#242424;transform:scaleX(0.9665);">Колонтитули</div>
<div class="t" id="t35" style="left:2061.00px;top:243.68px;font-size:24px;color:#242424;transform:scaleX(0.9871);">Текстове</div>
<div class="t" id="t36" style="left:2072.04px;top:275.68px;font-size:24px;color:#242424;transform:scaleX(0.9649);">поле</div>
<div class="t" id="t37" style="left:2170.00px;top:325.02px;font-size:21px;color:#242424;transform:scaleX(0.9202);">Текст</div>
<div class="t" id="t38" style="left:2363.99px;top:239.68px;font-size:24px;color:#242424;transform:scaleX(1.0149);">Символи</div>
<div class="t" id="t39" style="left:205.02px;top:337.38px;font-size:24px;color:#1b1b1b;font-weight:700;transform:scaleX(0.9808);">Вставлення таблиці</div>
<div class="t" id="t40" style="left:250.63px;top:729.28px;font-size:24px;color:#1b1b1b;transform:scaleX(0.9698);"><u>В</u>ставити таблицю...</div>
<div class="t" id="t41" style="left:250.60px;top:787.48px;font-size:24px;color:#1b1b1b;"><u>Н</u>акреслити таблицю</div>
<div class="t" id="t42" style="left:250.60px;top:845.68px;font-size:24px;color:#1b1b1b;transform:scaleX(0.9972);"><u>П</u>еретворити на таблицю...</div>
<div class="t" id="t43" style="left:250.63px;top:903.88px;font-size:24px;color:#1b1b1b;transform:scaleX(0.9653);">Е<u>л</u>ектронна таблиця Excel</div>
<div class="t" id="t44" style="left:250.60px;top:962.08px;font-size:24px;color:#1b1b1b;transform:scaleX(0.9958);"><u>Е</u>кспрес-таблиці</div>
<div class="t" id="t45" style="left:1784.70px;top:510.68px;font-size:24px;color:#000000;">Перетворити на таблицю</div>
<div class="t" id="t46" style="left:2184.00px;top:510.18px;font-size:24px;color:#000000;transform:scaleX(0.8077);">?</div>
<div class="t" id="t47" style="left:1784.74px;top:570.38px;font-size:22px;color:#000000;transform:scaleX(0.9580);">Розмір таблиці</div>
<div class="t" id="t48" style="left:1804.04px;top:622.08px;font-size:22px;color:#000000;transform:scaleX(0.9600);">Кі<u>л</u>ькість стовпців:</div>
<div class="t" id="t49" style="left:1804.05px;top:674.98px;font-size:22px;color:#6d6d6d;transform:scaleX(0.9531);">Кількість рядків:</div>
<div class="t" id="t50" style="left:1785.70px;top:732.38px;font-size:22px;color:#000000;transform:scaleX(0.9651);">Автодобір ширини стовпців</div>
<div class="t" id="t51" style="left:2044.09px;top:622.08px;font-size:22px;color:#000000;transform:scaleX(0.9091);">2</div>
<div class="t" id="t52" style="left:2044.10px;top:674.98px;font-size:22px;color:#6d6d6d;transform:scaleX(0.9038);">26</div>
<div class="t" id="t53" style="left:1839.50px;top:783.88px;font-size:22px;color:#000000;transform:scaleX(0.9186);">фіксован<u>а</u>:</div>
<div class="t" id="t54" style="left:2044.80px;top:783.88px;font-size:22px;color:#000000;transform:scaleX(0.9265);">Авто</div>
<div class="t" id="t55" style="left:1839.50px;top:836.88px;font-size:22px;color:#000000;transform:scaleX(0.9490);">за вмі<u>с</u>том</div>
<div class="t" id="t56" style="left:1839.50px;top:889.88px;font-size:22px;color:#000000;transform:scaleX(0.9611);">за ширино<u>ю</u> вікна</div>
<div class="t" id="t57" style="left:1784.56px;top:946.98px;font-size:22px;color:#000000;transform:scaleX(0.9435);">Роздільник</div>
<div class="t" id="t58" style="left:1839.50px;top:995.58px;font-size:22px;color:#000000;transform:scaleX(0.9420);"><u>з</u>нак абзацу</div>
<div class="t" id="t59" style="left:2032.02px;top:995.58px;font-size:22px;color:#000000;transform:scaleX(0.9830);"><u>к</u>рапка з комою</div>
<div class="t" id="t60" style="left:1839.50px;top:1044.58px;font-size:22px;color:#000000;transform:scaleX(0.9431);">знак табуляці<u>ї</u></div>
<div class="t" id="t61" style="left:2032.01px;top:1044.58px;font-size:22px;color:#000000;transform:scaleX(0.9879);">ін<u>ш</u>ий:</div>
<div class="t" id="t62" style="left:2128.00px;top:1044.58px;font-size:22px;color:#000000;transform:scaleX(0.8571);">-</div>
<div class="t" id="t63" style="left:2035.13px;top:1132.38px;font-size:22px;color:#000000;transform:scaleX(0.8678);">OK</div>
<div class="t" id="t64" style="left:2182.07px;top:1132.38px;font-size:22px;color:#000000;transform:scaleX(0.9324);">Скасувати</div>
<div class="t" id="t65" style="left:13.06px;top:1312.98px;font-size:22px;color:#3a3a3a;transform:scaleX(0.9376);">Сторінка 1 із 1</div>
<div class="t" id="t66" style="left:188.60px;top:1312.98px;font-size:22px;color:#3a3a3a;transform:scaleX(0.9038);">Слова: 102 із 102</div>
<div class="t" id="t67" style="left:450.00px;top:1312.98px;font-size:22px;color:#3a3a3a;transform:scaleX(0.9254);">українська</div>
<div class="t" id="t68" style="left:587.00px;top:1312.98px;font-size:22px;color:#3a3a3a;transform:scaleX(0.9413);">Завбачливий ввід тексту: увімкнуто</div>
<div class="t" id="t69" style="left:999.05px;top:1312.98px;font-size:22px;color:#3a3a3a;transform:scaleX(0.9451);">Спеціальні можливості: усе добре</div>
<div class="t" id="t70" style="left:1485.05px;top:1312.98px;font-size:22px;color:#3a3a3a;transform:scaleX(0.9506);">Параметри відображення</div>
<div class="t" id="t71" style="left:1800.09px;top:1312.98px;font-size:22px;color:#3a3a3a;transform:scaleX(0.9073);">Сфокусуватися</div>
<div class="t" id="t72" style="left:2495.11px;top:1312.98px;font-size:22px;color:#3a3a3a;transform:scaleX(0.8866);">160%</div>
<div class="t" id="t73" style="left:865.42px;top:494.60px;font-size:43px;color:#000000;transform:scaleX(0.9944);">Регіон</div>
<div class="t" id="t74" style="left:1016.04px;top:494.60px;font-size:43px;color:#000000;transform:scaleX(0.9874);">Площа·(км²)</div>
<div class="t" id="t75" style="left:864.07px;top:551.85px;font-size:43px;color:#000000;transform:scaleX(0.9669);">Одеська·область</div>
<div class="t" id="t76" style="left:1318.65px;top:551.85px;font-size:43px;color:#000000;transform:scaleX(0.9524);">33·310</div>
<div class="t" id="t77" style="left:866.00px;top:609.10px;font-size:43px;color:#000000;transform:scaleX(0.9955);">Дніпропетровська·область</div>
<div class="t" id="t78" style="left:1468.43px;top:609.10px;font-size:43px;color:#000000;transform:scaleX(0.9706);">31·914</div>
<div class="t" id="t79" style="left:863.04px;top:666.35px;font-size:43px;color:#000000;transform:scaleX(0.9853);">Чернігівська·область</div>
<div class="t" id="t80" style="left:1318.65px;top:666.35px;font-size:43px;color:#000000;transform:scaleX(0.9524);">31·865</div>
<div class="t" id="t81" style="left:866.00px;top:723.60px;font-size:43px;color:#000000;transform:scaleX(0.9666);">Харківська·область</div>
<div class="t" id="t82" style="left:1318.65px;top:723.60px;font-size:43px;color:#000000;transform:scaleX(0.9524);">31·415</div>
<div class="t" id="t83" style="left:866.00px;top:780.85px;font-size:43px;color:#000000;transform:scaleX(0.9796);">Житомирська·область</div>
<div class="t" id="t84" style="left:1317.67px;top:780.85px;font-size:43px;color:#000000;transform:scaleX(0.9671);">29·832</div>
<div class="t" id="t85" style="left:863.09px;top:838.10px;font-size:43px;color:#000000;transform:scaleX(0.9692);">Полтавська·область</div>
<div class="t" id="t86" style="left:1317.68px;top:838.10px;font-size:43px;color:#000000;transform:scaleX(0.9597);">28·748</div>
<div class="t" id="t87" style="left:866.00px;top:895.35px;font-size:43px;color:#000000;transform:scaleX(0.9627);">Херсонська·область</div>
<div class="t" id="t88" style="left:1317.67px;top:895.35px;font-size:43px;color:#000000;transform:scaleX(0.9671);">28·461</div>
<div class="t" id="t89" style="left:863.05px;top:952.60px;font-size:43px;color:#000000;transform:scaleX(0.9821);">Київська·область</div>
<div class="t" id="t90" style="left:1317.67px;top:952.60px;font-size:43px;color:#000000;transform:scaleX(0.9671);">28·131</div>
<div class="t" id="t91" style="left:865.02px;top:1009.85px;font-size:43px;color:#000000;transform:scaleX(0.9776);">Запорізька·область</div>
<div class="t" id="t92" style="left:1317.68px;top:1009.85px;font-size:43px;color:#000000;transform:scaleX(0.9597);">27·180</div>
<div class="t" id="t93" style="left:866.00px;top:1067.10px;font-size:43px;color:#000000;transform:scaleX(0.9723);">Луганська·область</div>
<div class="t" id="t94" style="left:1317.68px;top:1067.10px;font-size:43px;color:#000000;transform:scaleX(0.9597);">26·684</div>
<div class="t" id="t95" style="left:866.00px;top:1124.35px;font-size:43px;color:#000000;transform:scaleX(0.9835);">Донецька·область</div>
<div class="t" id="t96" style="left:1317.67px;top:1124.35px;font-size:43px;color:#000000;transform:scaleX(0.9671);">26·517</div>
<div class="t" id="t97" style="left:863.02px;top:1181.60px;font-size:43px;color:#000000;transform:scaleX(0.9930);">Вінницька·область</div>
<div class="t" id="t98" style="left:1317.68px;top:1181.60px;font-size:43px;color:#000000;transform:scaleX(0.9597);">26·513</div>
<div class="t" id="t99" style="left:862.80px;top:1238.85px;font-size:43px;color:#000000;transform:scaleX(1.0672);">Крим</div>
<div class="t" id="t100" style="left:1016.65px;top:1238.85px;font-size:43px;color:#000000;transform:scaleX(0.9765);">26·200</div><div class="a" style="left:850px;top:1266px;width:340px;height:34px;background:#f0f0f0"></div>
<svg width="2560" height="1344" style="left:0;top:0"><rect x="38" y="32" width="26" height="32" rx="1.5" fill="#fff"/>
<rect x="40.1" y="34.2" width="21.7" height="5.5" fill="#1b5abd"/>
<rect x="52.2" y="42.2" width="9.6" height="5.6" fill="#1b5abd"/>
<rect x="52.2" y="50.2" width="9.6" height="5.6" fill="#1b5abd"/>
<rect x="40.1" y="58.2" width="21.7" height="3.6" fill="#1b5abd"/>
<rect x="32" y="38" width="20" height="20" rx="2" fill="#fff"/>
<path d="M34.5 41.7 L37.3 41.7 L39 50 L40.8 42.3 L43.2 42.3 L45 50 L46.7 41.7 L49.4 41.7 L46.3 54 L43.8 54 L42 46.5 L40.2 54 L37.7 54 Z" fill="#1b5abd"/>
<rect x="297" y="29" width="82" height="38" rx="19" fill="none" stroke="#fff" stroke-width="2"/>
<circle cx="316" cy="48" r="14" fill="#fff"/>
<path d="M403 34 H433 V64 H406.5 L403 60.5 Z" fill="none" stroke="#fff" stroke-width="2"/>
<path d="M408.8 34 V45.8 H427 V34" fill="none" stroke="#fff" stroke-width="2"/>
<path d="M411 64 V54 H425 V64" fill="none" stroke="#fff" stroke-width="2"/>
<path d="M463.5 33 V45.5 H476" fill="none" stroke="#fff" stroke-width="2"/><path d="M464 45 L471.5 37.5 A11.2 11.2 0 0 1 487.3 53.3 L472.5 64.5" fill="none" stroke="#fff" stroke-width="2"/>
<g transform="translate(1030.5,0) scale(-1,1)"><path d="M463.5 33 V45.5 H476" fill="none" stroke="#fff" stroke-width="2"/><path d="M464 45 L471.5 37.5 A11.2 11.2 0 0 1 487.3 53.3 L472.5 64.5" fill="none" stroke="#fff" stroke-width="2"/></g>
<path d="M504.5 45.8 L510.0 51.2 L515.5 45.8" fill="none" stroke="#fff" stroke-width="2"/>
<path d="M604 44 H618" stroke="#fff" stroke-width="2"/>
<path d="M605.5 48.8 L611.0 54.2 L616.5 48.8" fill="none" stroke="#fff" stroke-width="2"/>
<circle cx="1010.6" cy="43" r="9" fill="none" stroke="#0d3d8e" stroke-width="1.8"/>
<path d="M1004.6 49.3 L993.8 61" stroke="#0d3d8e" stroke-width="1.9"/>
<path d="M2211.5 58.5 L2227.7 35.6 L2237.6 45.8 L2215.4 61.8 Z" fill="none" stroke="#fff" stroke-width="2" stroke-linejoin="miter"/>
<path d="M2221.8 56.5 A4.3 4.3 0 1 0 2229.6 53.3" fill="none" stroke="#fff" stroke-width="2"/>
<path d="M2233 32 V35.5 M2237.3 37.5 L2241.5 33.2 M2238.5 41 H2242" stroke="#fff" stroke-width="2"/>
<path d="M2310 47 H2330" stroke="#fff" stroke-width="2"/>
<rect x="2406.5" y="43" width="15" height="14.5" rx="2" fill="none" stroke="#fff" stroke-width="2"/>
<path d="M2410 39 H2422 A3.5 3.5 0 0 1 2425.5 42.5 V53.5" fill="none" stroke="#fff" stroke-width="2"/>
<path d="M2502.5 38.5 L2521.5 57.5 M2521.5 38.5 L2502.5 57.5" stroke="#fff" stroke-width="2"/>
<path d="M2015.5 116.5 H2035 V129.5 H2023.5 L2018.2 134.8 V129.5 H2015.5 Z" fill="none" stroke="#242424" stroke-width="1.6"/>
<g transform="translate(2205,141) rotate(-45)"><path d="M0 0 L9 -4.5 H36 A4.5 4.5 0 0 1 36 4.5 H9 Z M9 -4.5 V4.5 M32 -4.5 V4.5" fill="none" stroke="#242424" stroke-width="1.6"/></g>
<path d="M2407.5 122.5 L2413.0 128.5 L2418.5 122.5" fill="none" stroke="#242424" stroke-width="2"/>
<path d="M2471.5 123.5 V137.5 H2490.5 V129" fill="none" stroke="#fff" stroke-width="1.6"/>
<path d="M2475.5 130 C2477 121.5 2484 119.5 2493 122.5 M2487.5 115.5 L2493.5 122.5 L2487.5 129" fill="none" stroke="#fff" stroke-width="1.6"/>
<path d="M2513.5 123.8 L2519.0 129.2 L2524.5 123.8" fill="none" stroke="#fff" stroke-width="2"/>
<path d="M69 171 H94 L109 186 V225 H69 Z" fill="#fafafa" stroke="#2b2b2b" stroke-width="1.7"/>
<path d="M93 171 V187 H109" fill="none" stroke="#2b2b2b" stroke-width="1.7"/>
<rect x="74" y="186" width="14" height="3.8" fill="#707070"/><rect x="74" y="194.1" width="30" height="1.7" fill="#707070"/><rect x="74" y="200.2" width="22" height="1.7" fill="#707070"/>
<path d="M83.0 279.0 L89.0 285.0 L95.0 279.0" fill="none" stroke="#242424" stroke-width="2"/>
<rect x="197.0" y="175.0" width="54.0" height="54.0" fill="#fafafa" stroke="#2b2b2b" stroke-width="1.8"/><rect x="197.9" y="175.9" width="52.2" height="7.1" fill="#c8c8c8"/><path d="M197.0 183.0 H251.0" stroke="#2b2b2b" stroke-width="1.62"/><path d="M215.1 183.0 V229.0" stroke="#6e6e6e" stroke-width="1.4"/><path d="M233.0 183.0 V229.0" stroke="#6e6e6e" stroke-width="1.4"/><path d="M197.0 199.0 H251.0" stroke="#6e6e6e" stroke-width="1.4"/><path d="M197.0 212.7 H251.0" stroke="#6e6e6e" stroke-width="1.4"/>
<path d="M217.0 284.0 L223.0 290.0 L229.0 284.0" fill="none" stroke="#242424" stroke-width="2"/>
<rect x="353" y="181" width="54" height="40" fill="#fafafa" stroke="#2b2b2b" stroke-width="1.8"/>
<path d="M354 206.3 L367.9 191.8 L396 220.2 H354 Z" fill="#83bbec" stroke="#0f62b5" stroke-width="1.6" stroke-linejoin="round"/>
<path d="M385.8 208 L391.9 201.4 L406 216.3 V220.2 H396 Z" fill="#83bbec" stroke="#0f62b5" stroke-width="1.6" stroke-linejoin="round"/>
<rect x="353" y="181" width="54" height="40" fill="none" stroke="#2b2b2b" stroke-width="1.8"/>
<circle cx="396" cy="191.8" r="3.6" fill="#e06c00"/>
<path d="M374.0 284.0 L380.0 290.0 L386.0 284.0" fill="none" stroke="#242424" stroke-width="2"/>
<rect x="467" y="173" width="20.5" height="20" fill="#83bbec" stroke="#0f62b5" stroke-width="1.7"/>
<circle cx="486.8" cy="193" r="10.4" fill="#fafafa" stroke="#fff" stroke-width="4"/>
<circle cx="486.8" cy="193" r="10.4" fill="#fafafa" stroke="#2b2b2b" stroke-width="1.6"/>
<path d="M586.5 186.0 L592.0 192.0 L597.5 186.0" fill="none" stroke="#242424" stroke-width="2"/>
<path d="M466.5 231.5 C467 240 471 245 478 246.5 L482 238 C478 236 476 232 476 231 Z" fill="#83bbec" stroke="#0f62b5" stroke-width="1.6"/>
<circle cx="483.5" cy="230.5" r="5.3" fill="#83bbec" stroke="#0f62b5" stroke-width="1.6"/>
<path d="M488.5 228 L494 228.5 L489 233" fill="#83bbec" stroke="#0f62b5" stroke-width="1.6"/>
<path d="M493.8 239 C485 238 477.5 242 477 249 C477 254 482 255.5 487 254.5 C493 252 494 245 493.8 239 Z" fill="#fafafa" stroke="#fff" stroke-width="3.5"/>
<path d="M493.8 239 C485 238 477.5 242 477 249 C477 254 482 255.5 487 254.5 C493 252 494 245 493.8 239 Z M474.5 256 L486 246" fill="none" stroke="#2b2b2b" stroke-width="1.6"/>
<path d="M480.8 277.8 L493.7 285.2 V299.4 L480.8 306.2 L468.3 299.4 V285.2 Z" fill="#fafafa" stroke="#0f62b5" stroke-width="1.7" stroke-linejoin="round"/>
<path d="M493.7 285.2 L480.8 292.6 V306.2 M468.3 285.2 L475.6 289" fill="none" stroke="#0f62b5" stroke-width="1.7"/>
<path d="M647.0 289.0 L652.5 295.0 L658.0 289.0" fill="none" stroke="#242424" stroke-width="2"/>
<path d="M684 176.5 H703 L711.5 183.5 H695.5 V191.5 H684 L691.5 184 Z" fill="#a6dcab" stroke="#22a04b" stroke-width="1.6" stroke-linejoin="round"/>
<rect x="695.5" y="186.5" width="18.8" height="12.6" fill="#fff" stroke="#2b2b2b" stroke-width="1.7"/>
<path d="M699 191 h1.6 M699 195 h1.6 M703 191 H711 M703 195 H711" stroke="#6e6e6e" stroke-width="1.6"/>
<rect x="684" y="239" width="9.5" height="16" fill="#c8c8c8" stroke="#6e6e6e" stroke-width="1.6"/>
<rect x="704.5" y="231" width="9.6" height="24" fill="#83bbec" stroke="#0f62b5" stroke-width="1.7"/>
<rect x="693.5" y="225" width="11" height="30" fill="#fafafa" stroke="#2b2b2b" stroke-width="1.7"/>
<rect x="687.5" y="277" width="22.5" height="18.5" fill="#fafafa" stroke="#6e6e6e" stroke-width="1.6" stroke-dasharray="3.5 2.2"/>
<path d="M684 294.5 H688 L690 292.3 H696 L698 294.5 H702.3 V307 H684 Z" fill="#c8c8c8" stroke="#2b2b2b" stroke-width="1.7"/>
<circle cx="693" cy="300.5" r="3" fill="#fff" stroke="#2b2b2b" stroke-width="1.6"/>
<path d="M710 298 V307.5 M705.3 302.7 H714.8" stroke="#22a04b" stroke-width="1.8"/>
<path d="M727.5 289.5 L733.0 295.5 L738.5 289.5" fill="none" stroke="#242424" stroke-width="2"/>
<path d="M898 219.5 V181 H948.6" fill="none" stroke="#2b2b2b" stroke-width="1.7"/>
<rect x="904.8" y="187.7" width="46.5" height="34.5" fill="none" stroke="#2b2b2b" stroke-width="1.7"/>
<rect x="908.8" y="191.6" width="38.5" height="26.6" fill="#fafafa" stroke="#6e6e6e" stroke-width="1.6"/>
<circle cx="934" cy="210.9" r="12.1" fill="#fafafa" stroke="#fff" stroke-width="5"/>
<circle cx="934" cy="210.9" r="12.1" fill="#fafafa" stroke="#1e86d2" stroke-width="1.7"/>
<path d="M942.6 219.5 L956 233" stroke="#1e86d2" stroke-width="1.8"/>
<path d="M1162 171 L1184 183.7 V210.4 L1162 223.1 L1140 210.4 V183.7 Z" fill="#fafafa" stroke="#0f62b5" stroke-width="1.7" stroke-linejoin="round"/>
<path d="M1141 199 L1151.7 205.2 V218.6 L1141 224.8 L1130.3 218.6 V205.2 Z" fill="#fafafa" stroke="#fff" stroke-width="4" stroke-linejoin="round"/>
<path d="M1141 199 L1151.7 205.2 V218.6 L1141 224.8 L1130.3 218.6 V205.2 Z" fill="#fafafa" stroke="#0f62b5" stroke-width="1.7" stroke-linejoin="round"/>
<path d="M1149.6 279.0 L1155.6 285.0 L1161.6 279.0" fill="none" stroke="#242424" stroke-width="2"/>
<rect x="1293.5" y="183.3" width="53" height="37.5" fill="#fafafa" stroke="#2b2b2b" stroke-width="1.7"/>
<rect x="1298.2" y="184.0" width="3.6" height="3.8" fill="#2b2b2b"/>
<rect x="1298.2" y="193.0" width="3.6" height="3.8" fill="#2b2b2b"/>
<rect x="1298.2" y="201.0" width="3.6" height="3.8" fill="#2b2b2b"/>
<rect x="1298.2" y="209.0" width="3.6" height="3.8" fill="#2b2b2b"/>
<rect x="1298.2" y="217.0" width="3.6" height="3.8" fill="#2b2b2b"/>
<rect x="1338.3" y="184.0" width="3.6" height="3.8" fill="#2b2b2b"/>
<rect x="1338.3" y="193.0" width="3.6" height="3.8" fill="#2b2b2b"/>
<circle cx="1337" cy="218.7" r="14.4" fill="#fafafa" stroke="#fff" stroke-width="5"/>
<circle cx="1337" cy="218.7" r="14" fill="#fafafa" stroke="#1e86d2" stroke-width="1.7"/>
<ellipse cx="1337" cy="218.7" rx="5" ry="14" fill="none" stroke="#1e86d2" stroke-width="1.6"/>
<path d="M1323 214 H1351 M1323 223.4 H1351" stroke="#1e86d2" stroke-width="1.6"/>
<path d="M1463.8 202.7 A12.1 12.1 0 0 1 1464.7 178.5 H1481.4 A12.1 12.1 0 0 1 1481.4 202.7 H1472.3" fill="none" stroke="#2b2b2b" stroke-width="1.7"/>
<path d="M1487.6 192.9 H1478.8 A12.1 12.1 0 0 0 1478.8 217.1 H1495.5 A12.1 12.1 0 0 0 1496.4 192.9" fill="none" stroke="#2b2b2b" stroke-width="1.7"/>
<path d="M1472.5 279.0 L1478.5 285.0 L1484.5 279.0" fill="none" stroke="#242424" stroke-width="2"/>
<path d="M1617.4 177 H1657 V213.5 H1621 L1608.7 226 V213.5 H1603 V189.3" fill="#fafafa" stroke="#2b2b2b" stroke-width="1.7"/>
<rect x="1597" y="173" width="34" height="15" fill="#fff"/><rect x="1608" y="168" width="10" height="34" fill="#fff"/>
<path d="M1603 189.3 V200 M1617.4 177 H1631" stroke="#2b2b2b" stroke-width="1.7"/>
<path d="M1613 170 V201 M1598 185.2 H1628.7" stroke="#22a04b" stroke-width="1.8"/>
<path d="M1731.0 173.0 H1743.4 L1753.0 182.5 V203.0 H1731.0 Z" fill="#fafafa" stroke="#2b2b2b" stroke-width="1.7"/><path d="M1743.4 173.0 V182.5 H1753.0" fill="none" stroke="#2b2b2b" stroke-width="1.6"/>
<rect x="1734.5" y="178.7" width="7.8" height="4.6" fill="#fbe3a6" stroke="#e06c00" stroke-width="1.4"/>
<path d="M1731.0 225.0 H1743.4 L1753.0 234.5 V255.0 H1731.0 Z" fill="#fafafa" stroke="#2b2b2b" stroke-width="1.7"/><path d="M1743.4 225.0 V234.5 H1753.0" fill="none" stroke="#2b2b2b" stroke-width="1.6"/>
<rect x="1734.5" y="244.3" width="15" height="5" fill="#fbe3a6" stroke="#e06c00" stroke-width="1.4"/>
<path d="M1731.0 277.0 H1743.4 L1753.0 286.5 V307.0 H1731.0 Z" fill="#fafafa" stroke="#2b2b2b" stroke-width="1.7"/><path d="M1743.4 277.0 V286.5 H1753.0" fill="none" stroke="#2b2b2b" stroke-width="1.6"/>
<path d="M1739 292.5 L1738 301.5 M1744 292.5 L1743 301.5 M1736.3 295.3 H1746.8 M1736 298.8 H1746.5" stroke="#1e86d2" stroke-width="1.7"/>
<path d="M1993.5 186.0 L1999.0 192.0 L2004.5 186.0" fill="none" stroke="#242424" stroke-width="2"/>
<path d="M1991.0 238.0 L1996.5 244.0 L2002.0 238.0" fill="none" stroke="#242424" stroke-width="2"/>
<path d="M1951.5 290.0 L1957.0 296.0 L1962.5 290.0" fill="none" stroke="#242424" stroke-width="2"/>
<rect x="2082.5" y="179.5" width="57.5" height="45.5" fill="#fafafa" stroke="#2b2b2b" stroke-width="1.7"/>
<rect x="2079.5" y="176.5" width="5" height="5" fill="#fff" stroke="#1e86d2" stroke-width="1.5"/>
<rect x="2137.5" y="176.5" width="5" height="5" fill="#fff" stroke="#1e86d2" stroke-width="1.5"/>
<rect x="2079.5" y="222.5" width="5" height="5" fill="#fff" stroke="#1e86d2" stroke-width="1.5"/>
<rect x="2137.5" y="222.5" width="5" height="5" fill="#fff" stroke="#1e86d2" stroke-width="1.5"/>
<path d="M2099.5 215.8 L2111 188 L2122.5 215.8 M2104 206.8 H2118" fill="none" stroke="#1e86d2" stroke-width="2"/>
<path d="M2134.5 284.0 L2140.0 290.0 L2145.5 284.0" fill="none" stroke="#242424" stroke-width="2"/>
<rect x="2182" y="173" width="22.5" height="30.5" fill="#fafafa" stroke="#2b2b2b" stroke-width="1.7"/>
<rect x="2187.5" y="178.7" width="11.2" height="6.8" fill="#83bbec" stroke="#0f62b5" stroke-width="1.5"/>
<path d="M2187.2 188.8 H2194.8" stroke="#6e6e6e" stroke-width="1.4"/>
<rect x="2187.5" y="192.5" width="11.2" height="5" fill="#c8c8c8" stroke="#6e6e6e" stroke-width="1.4"/>
<path d="M2221.5 185.7 L2227.0 191.7 L2232.5 185.7" fill="none" stroke="#242424" stroke-width="2"/>
<path d="M2181 244 L2205.5 225.5 L2200.5 255.2 M2191 237.5 L2202 242" fill="none" stroke="#1e86d2" stroke-width="2"/>
<path d="M2221.5 237.5 L2227.0 243.5 L2232.5 237.5" fill="none" stroke="#242424" stroke-width="2"/>
<path d="M2178 295.5 L2186 276.8 L2194 295.5 M2181 288.5 H2191" fill="none" stroke="#1e86d2" stroke-width="1.8"/>
<path d="M2197.2 278.8 H2209 M2197.2 287 H2209 M2197.2 294.8 H2209 M2177.5 303 H2209" stroke="#2b2b2b" stroke-width="1.7"/>
<path d="M2221.5 289.6 L2227.0 295.6 L2232.5 289.6" fill="none" stroke="#242424" stroke-width="2"/>
<path d="M2266 173 H2281 L2288.5 180.5 V203 H2266 Z" fill="#fafafa" stroke="#2b2b2b" stroke-width="1.7"/>
<path d="M2281 173 V180.5 H2288.5" fill="none" stroke="#2b2b2b" stroke-width="1.5"/>
<g transform="translate(2273,197) rotate(-42)"><path d="M0 0 L6 -3 H24 A3 3 0 0 1 24 3 H6 Z" fill="#fafafa" stroke="#fff" stroke-width="3.5"/><path d="M0 0 L6 -3 H24 A3 3 0 0 1 24 3 H6 Z M6 -3 V3" fill="#fafafa" stroke="#1e86d2" stroke-width="1.6"/></g>
<path d="M2269 198.8 H2285" stroke="#1e86d2" stroke-width="1.6"/>
<path d="M2309.5 185.7 L2315.0 191.7 L2320.5 185.7" fill="none" stroke="#242424" stroke-width="2"/>
<path d="M2262.5 227 H2292 V236 M2262.5 227 V255 H2276" fill="#fafafa" stroke="#2b2b2b" stroke-width="1.7"/>
<path d="M2262.5 232.6 H2292 M2268 224 V229.8 M2286 224 V229.8" stroke="#2b2b2b" stroke-width="1.7"/>
<circle cx="2283.7" cy="247" r="8.6" fill="#fafafa" stroke="#fff" stroke-width="3"/>
<circle cx="2283.7" cy="247" r="8.4" fill="#fafafa" stroke="#1e86d2" stroke-width="1.7"/>
<path d="M2283.5 241.5 V247.5 H2288" fill="none" stroke="#2b2b2b" stroke-width="1.6"/>
<path d="M2266 282 V277 H2288.5 V307 H2266 V300" fill="#fafafa" stroke="#2b2b2b" stroke-width="1.7"/>
<rect x="2262" y="283.3" width="16" height="16" fill="#fafafa" stroke="#0f62b5" stroke-width="1.8"/>
<rect x="2263" y="284.3" width="14" height="2.8" fill="#83bbec"/>
<path d="M2309.5 289.6 L2315.0 295.6 L2320.5 289.6" fill="none" stroke="#242424" stroke-width="2"/>
<path d="M2391 220.4 H2405.5 V219 C2385 203 2387 175.8 2414 175.8 C2441 175.8 2443 203 2422.5 219 V220.4 H2437" fill="none" stroke="#2b2b2b" stroke-width="3"/>
<path d="M2408.0 280.0 L2413.5 286.0 L2419.0 280.0" fill="none" stroke="#242424" stroke-width="2"/>
<path d="M2506.5 324.5 L2515.0 333.5 L2523.5 324.5" fill="none" stroke="#242424" stroke-width="2"/>
<rect x="202.8" y="724.6" width="30.5" height="30.4" fill="#fafafa" stroke="#2b2b2b" stroke-width="1.7"/><rect x="203.7" y="725.5" width="28.8" height="5.5" fill="#c8c8c8"/><path d="M202.8 731.0 H233.3" stroke="#2b2b2b" stroke-width="1.53"/><path d="M213.1 731.0 V755.0" stroke="#6e6e6e" stroke-width="1.4"/><path d="M223.3 731.0 V755.0" stroke="#6e6e6e" stroke-width="1.4"/><path d="M202.8 739.2 H233.3" stroke="#6e6e6e" stroke-width="1.4"/><path d="M202.8 746.8 H233.3" stroke="#6e6e6e" stroke-width="1.4"/>
<path d="M222.4 785 H203 V811 H233.3 V791.2" fill="#fafafa" stroke="#2b2b2b" stroke-width="1.7"/>
<path d="M213.1 785 V811 M223.3 800 V811 M203 793.5 H219 M203 802.5 H212" stroke="#6e6e6e" stroke-width="1.4"/>
<g transform="translate(214.5,801.5) rotate(-45)"><path d="M0 0 L5 -2.8 H22 A2.8 2.8 0 0 1 22 2.8 H5 Z" fill="#fafafa" stroke="#fff" stroke-width="3"/><path d="M0 0 L5 -2.8 H22 A2.8 2.8 0 0 1 22 2.8 H5 Z M5 -2.8 V2.8" fill="#fafafa" stroke="#1e86d2" stroke-width="1.7"/></g>
<path d="M204 843 H218 M204 846.8 H218 M210.5 850.5 H218" stroke="#2b2b2b" stroke-width="1.6"/>
<path d="M210 852 C202 854 201.5 864 210 865.5 H217 M211 859 L217.5 865.3 L211 871.5" fill="none" stroke="#1e86d2" stroke-width="1.7"/>
<rect x="223" y="842.8" width="10.4" height="24.4" fill="#fafafa" stroke="#2b2b2b" stroke-width="1.7"/>
<path d="M223 855 H233.4" stroke="#2b2b2b" stroke-width="1.6"/>
<path d="M226.5 848.5 H230 M226.5 861 H230" stroke="#1e86d2" stroke-width="1.6"/>
<path d="M202.8 929 V898.6 H233.3 V912 M216 929 H202.8" fill="#fafafa" stroke="#2b2b2b" stroke-width="1.7"/>
<rect x="203.6" y="899.5" width="28.8" height="4.5" fill="#c8c8c8"/>
<path d="M202.8 904.8 H233.3" stroke="#2b2b2b" stroke-width="1.5"/>
<path d="M213.1 905 V929 M223.3 905 V911 M203 913 H213 M203 921 H213" stroke="#6e6e6e" stroke-width="1.4"/>
<rect x="216.2" y="912.3" width="17.5" height="17.2" rx="2.2" fill="#107c41"/>
<path d="M221.3 916.5 L228.6 925.3 M228.6 916.5 L221.3 925.3" stroke="#fff" stroke-width="2.2"/>
<rect x="202.8" y="956.8" width="30.5" height="30.2" fill="#fafafa" stroke="#2b2b2b" stroke-width="1.7"/><rect x="203.7" y="957.6" width="28.8" height="5.7" fill="#c8c8c8"/><path d="M202.8 963.3 H233.3" stroke="#2b2b2b" stroke-width="1.53"/><path d="M213.1 963.3 V987.0" stroke="#6e6e6e" stroke-width="1.4"/><path d="M223.3 963.3 V987.0" stroke="#6e6e6e" stroke-width="1.4"/><path d="M202.8 971.2 H233.3" stroke="#6e6e6e" stroke-width="1.4"/><path d="M202.8 979.0 H233.3" stroke="#6e6e6e" stroke-width="1.4"/>
<path d="M567.5 963.8 L577.5 972.3 L567.5 980.8" fill="none" stroke="#242424" stroke-width="1.8"/>
<path d="M2270 511.5 L2289.5 531 M2289.5 511.5 L2270 531" stroke="#111" stroke-width="1.8"/>
<path d="M2180 624.5 L2184 620.0 L2188 624.5 Z" fill="#111"/><path d="M2180 638.5 L2184 643.0 L2188 638.5 Z" fill="#111"/>
<path d="M2180 677.5 L2184 673.0 L2188 677.5 Z" fill="#111"/><path d="M2180 691.5 L2184 696.0 L2188 691.5 Z" fill="#9a9a9a"/>
<path d="M2180 786.5 L2184 782.0 L2188 786.5 Z" fill="#111"/><path d="M2180 800.5 L2184 805.0 L2188 800.5 Z" fill="#111"/>
<path d="M388 1312 H396 Q400.5 1312 400.5 1316.5 V1326.5 M400.5 1316.5 Q400.5 1312 405 1312 H413 V1322.5 M397.5 1334.5 H388 V1312" fill="none" stroke="#1a1a1a" stroke-width="1.8"/>
<path d="M397.5 1329.5 L404 1336 L414 1326" fill="none" stroke="#1a1a1a" stroke-width="2"/>
<circle cx="976.8" cy="1313.5" r="3.6" fill="none" stroke="#1a1a1a" stroke-width="1.8"/>
<path d="M972.5 1316 L967 1314.5 Q964.5 1314.5 965.5 1317.5 L972 1320 V1326 L969 1334 Q970 1336.5 973.5 1335.5 M981 1316 L986 1314.5 Q988.5 1314.5 987.5 1317.5 L982 1320 V1325.5" fill="none" stroke="#1a1a1a" stroke-width="1.8"/>
<path d="M977.5 1329.5 L984 1336 L994.5 1325.8" fill="none" stroke="#1a1a1a" stroke-width="2"/>
<path d="M1463 1327.8 H1452 V1311.8 H1478.5 V1319" fill="none" stroke="#1a1a1a" stroke-width="1.8"/>
<path d="M1476.08 1326.61 L1478.44 1326.81 L1478.44 1328.79 L1476.08 1328.99 L1475.20 1331.12 L1476.73 1332.92 L1475.32 1334.33 L1473.52 1332.80 L1471.39 1333.68 L1471.19 1336.04 L1469.21 1336.04 L1469.01 1333.68 L1466.88 1332.80 L1465.08 1334.33 L1463.67 1332.92 L1465.20 1331.12 L1464.32 1328.99 L1461.96 1328.79 L1461.96 1326.81 L1464.32 1326.61 L1465.20 1324.48 L1463.67 1322.68 L1465.08 1321.27 L1466.88 1322.80 L1469.01 1321.92 L1469.21 1319.56 L1471.19 1319.56 L1471.39 1321.92 L1473.52 1322.80 L1475.32 1321.27 L1476.73 1322.68 L1475.20 1324.48 Z" fill="#f3f3f3" stroke="#1a1a1a" stroke-width="1.7" stroke-linejoin="round"/><circle cx="1470.2" cy="1327.8" r="2.6" fill="#1a1a1a"/>
<path d="M1767.5 1314 V1309.5 H1772 M1790 1309.5 H1794.5 V1314 M1794.5 1331 V1335.5 H1790 M1772 1335.5 H1767.5 V1331" fill="none" stroke="#1a1a1a" stroke-width="1.8"/>
<path d="M1774 1314 H1784 L1789 1319 V1331.5 H1774 Z M1784 1314 V1319 H1789" fill="none" stroke="#1a1a1a" stroke-width="1.6"/>
<path d="M1992.5 1310 H2003 L2005 1312 L2007 1310 H2017.5 V1331 H2007 L2005 1333.5 L2003 1331 H1992.5 Z M2005 1312 V1333" fill="none" stroke="#1a1a1a" stroke-width="1.8"/>
<path d="M1995.5 1315.5 H2001.5 M1995.5 1320 H2001.5 M1995.5 1324.5 H2001.5 M2008.5 1315.5 H2014.5 M2008.5 1320 H2014.5 M2008.5 1324.5 H2014.5" stroke="#1a1a1a" stroke-width="1.5"/>
<rect x="2074.8" y="1309.8" width="20.5" height="25.5" fill="none" stroke="#1a1a1a" stroke-width="1.8"/>
<path d="M2078 1315 H2092 M2078 1319.5 H2092 M2078 1324 H2092 M2078 1328.5 H2092" stroke="#1a1a1a" stroke-width="1.6"/>
<path d="M2165 1335 H2152.8 V1309.8 H2176 V1322" fill="none" stroke="#1a1a1a" stroke-width="1.8"/>
<path d="M2156 1315 H2173 M2156 1319.5 H2166 M2156 1324 H2163" stroke="#1a1a1a" stroke-width="1.5"/>
<circle cx="2171.5" cy="1328.5" r="7.3" fill="#f3f3f3" stroke="#1a1a1a" stroke-width="1.7"/><ellipse cx="2171.5" cy="1328.5" rx="3" ry="7.3" fill="none" stroke="#1a1a1a" stroke-width="1.4"/><path d="M2164.5 1326 H2178.5 M2164.5 1331 H2178.5" stroke="#1a1a1a" stroke-width="1.4"/>
<path d="M2218 1322.6 H2233 M2245 1322.6 H2443 M2344 1318 V1328 M2454 1322.6 H2469 M2461.5 1315 V1330" stroke="#555" stroke-width="1.6"/>
<rect x="2354" y="1312" width="10" height="22" fill="#666"/></svg>
</body></html>
